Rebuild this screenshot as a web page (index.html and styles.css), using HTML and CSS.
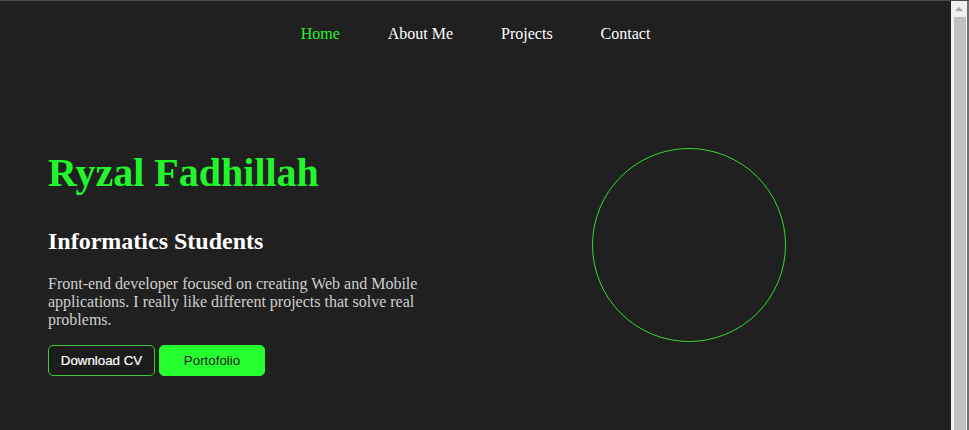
FILE: index.html
```html
<!DOCTYPE html>
<html lang="en">
<head>
<meta charset="utf-8">
<title>Ryzal Fadhillah</title>
<link rel="stylesheet" href="styles.css">
</head>
<body>
<div class="window">
  <div class="page">
    <nav class="nav">
      <a class="nav-link active" href="#">Home</a>
      <a class="nav-link" href="#">About Me</a>
      <a class="nav-link" href="#">Projects</a>
      <a class="nav-link" href="#">Contact</a>
    </nav>
    <section class="hero">
      <div class="hero-text">
        <h1 class="name">Ryzal Fadhillah</h1>
        <h2 class="role">Informatics Students</h2>
        <p class="intro">Front-end developer focused on creating Web and Mobile applications. I really like different projects that solve real problems.</p>
        <div class="actions">
          <button class="btn btn-outline">Download CV</button>
          <button class="btn btn-fill">Portofolio</button>
        </div>
      </div>
      <div class="hero-visual">
        <div class="ring"></div>
      </div>
    </section>
  </div>
  <div class="scrollbar">
    <div class="sb-arrow"><span class="sb-tri"></span></div>
    <div class="sb-thumb"></div>
  </div>
</div>
</body>
</html>
```
FILE: styles.css
```css
html, body {
  margin: 0;
  padding: 0;
  height: 100%;
  overflow: hidden;
}
body {
  background: #202020;
  font-family: "Liberation Serif", "Times New Roman", serif;
}
.window {
  display: flex;
  height: 430px;
  border-top: 1px solid #4a4a4a;
  box-sizing: border-box;
}
.page {
  flex: 1;
  background: #202020;
}
.nav {
  display: flex;
  justify-content: center;
  gap: 48px;
  padding: 24px 0 24px;
  font-size: 16px;
}
.nav-link {
  color: #ffffff;
  text-decoration: none;
}
.nav-link.active {
  color: #2cf02c;
}
.hero {
  display: flex;
  align-items: flex-start;
  padding: 81px 48px 0;
}
.hero-text {
  flex: 1;
}
.hero-visual {
  flex: 1;
  display: flex;
  justify-content: center;
}
.name {
  margin: 1px 0 32px;
  font-size: 40px;
  font-weight: bold;
  color: #22f52c;
}
.role {
  margin: 0 0 20px;
  font-size: 24px;
  font-weight: bold;
  color: #ffffff;
}
.intro {
  margin: 0 0 16px;
  font-size: 16px;
  color: #cfcfcf;
}
.actions {
  display: flex;
  gap: 4px;
}
.btn {
  font-family: "Liberation Sans", Arial, sans-serif;
  font-size: 13.333px;
  height: 31px;
  border-radius: 5px;
  border: 1px solid transparent;
  cursor: pointer;
  box-sizing: border-box;
}
.btn-outline {
  background: #1c1c1c;
  color: #ffffff;
  border-color: #3fc83f;
  width: 107px;
  padding: 0;
  -webkit-text-stroke: 0.2px #ffffff;
}
.btn-fill {
  background: #26ff2e;
  color: #1b1b1b;
  border-color: #26ff2e;
  width: 106px;
  padding: 0;
}
.ring {
  width: 192px;
  height: 192px;
  border: 1px solid #2fdc2f;
  border-radius: 50%;
}
.scrollbar {
  width: 16px;
  background: #f0f0f0;
  border-right: 2px solid #6f6f6f;
  display: flex;
  flex-direction: column;
}
.sb-arrow {
  height: 16px;
  display: flex;
  align-items: center;
  justify-content: center;
}
.sb-tri {
  width: 0;
  height: 0;
  border-left: 4px solid transparent;
  border-right: 4px solid transparent;
  border-bottom: 4px solid #a3a3a3;
}
.sb-thumb {
  flex: 1;
  margin: 0 1px 0 3px;
  background: #c1c1c1;
}
```
